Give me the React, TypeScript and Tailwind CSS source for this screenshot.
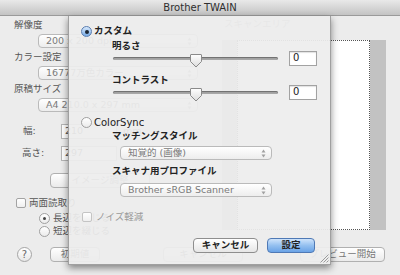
import type { ReactNode } from "react";

function Radio({ on, blue }: { on?: boolean; blue?: boolean }) {
  if (on && blue) {
    return (
      <span className="flex h-[11px] w-[11px] shrink-0 items-center justify-center rounded-full border border-[#5a7db0] bg-linear-to-b from-[#d6e8fb] to-[#78abe6]">
        <span className="h-[4px] w-[4px] rounded-full bg-[#1b2533]" />
      </span>
    );
  }
  return (
    <span className="flex h-[11px] w-[11px] shrink-0 items-center justify-center rounded-full border border-[#a0a0a0] bg-linear-to-b from-white to-[#ebebeb]">
      {on && <span className="h-[3px] w-[3px] rounded-full bg-[#444]" />}
    </span>
  );
}

function Check({ dim }: { dim?: boolean }) {
  return (
    <span
      className={`h-[10px] w-[10px] shrink-0 rounded-[2px] border bg-linear-to-b from-white to-[#efefef] ${dim ? "border-[#c4c4c4]" : "border-[#a3a3a3]"}`}
    />
  );
}

function Slider() {
  return (
    <div className="relative h-[15px] w-[165px]">
      <div className="absolute left-0 right-0 top-[6px] h-[3px] rounded-full bg-[#a7a7a7] shadow-[inset_0_1px_1px_rgba(0,0,0,0.35)]" />
      <svg className="absolute left-[77px] top-[3px]" width="12" height="14" viewBox="0 0 12 14">
        <defs>
          <linearGradient id="thumb" x1="0" y1="0" x2="0" y2="1">
            <stop offset="0" stopColor="#ffffff" />
            <stop offset="1" stopColor="#dcdcdc" />
          </linearGradient>
        </defs>
        <path d="M1 0.5 H11 Q11.5 0.5 11.5 1 V7.5 L6 13 L0.5 7.5 V1 Q0.5 0.5 1 0.5 Z" fill="url(#thumb)" stroke="#8a8a8a" />
      </svg>
    </div>
  );
}

function NumBox() {
  return (
    <div className="h-[15px] w-[28px] border border-[#a2a2a2] bg-white pl-[3px] text-[10px] leading-[12px] text-[#222] shadow-[inset_0_1px_1px_rgba(0,0,0,0.12)]">
      0
    </div>
  );
}

function Arrows() {
  return (
    <svg width="5" height="9" viewBox="0 0 5 9">
      <path d="M2.5 0.5 L4.5 3.5 H0.5 Z" fill="#a0a0a0" />
      <path d="M0.5 5.5 H4.5 L2.5 8.5 Z" fill="#a0a0a0" />
    </svg>
  );
}

function Select({ children, w }: { children: ReactNode; w: string }) {
  return (
    <div className={`flex h-[14px] items-center justify-between rounded-[4px] border border-[#bababa] bg-linear-to-b from-white to-[#ededed] pl-[7px] pr-[5px] text-[#7a7a7a] ${w}`}>
      <span className="leading-[12px]">{children}</span>
      <Arrows />
    </div>
  );
}

function BgButton({ children, w }: { children: ReactNode; w: string }) {
  return (
    <div className={`flex h-[15px] items-center justify-center rounded-[4px] border border-[#b0b0b0] bg-linear-to-b from-white to-[#ebebeb] text-[#777] ${w}`}>
      {children}
    </div>
  );
}

export default function App() {
  return (
    <div className="relative h-[275px] w-[400px] overflow-hidden bg-[#ececec] font-['DejaVu_Sans','Noto_Sans_CJK_JP',sans-serif] text-[9.5px] text-[#555]">
      {/* title bar */}
      <div className="flex h-[16px] items-center justify-center border-b border-[#9a9a9a] bg-linear-to-b from-[#e9e9e9] to-[#c3c3c3] text-[10px] text-[#2e2e2e]">
        Brother TWAIN
      </div>

      {/* window body */}
      <div className="flex h-[224px]">
        <div className="flex w-[222px] flex-col pl-[14px]">
          <div className="mt-[4px] h-[10px] leading-[10px]">解像度</div>
          <div className="ml-[24px] mt-[4px]">
            <Select w="w-[160px]">200 x 200 dpi</Select>
          </div>
          <div className="mt-[4px] h-[10px] leading-[10px]">カラー設定</div>
          <div className="ml-[24px] mt-[4px]">
            <Select w="w-[160px]">16777万色カラー</Select>
          </div>
          <div className="mt-[4px] h-[10px] leading-[10px]">原稿サイズ</div>
          <div className="ml-[24px] mt-[4px]">
            <Select w="w-[160px]">A4 210.0 x 297 mm</Select>
          </div>
          <div className="mt-[12px] flex h-[15px] items-center">
            <span className="w-[47px] pl-[9px]">幅:</span>
            <div className="flex h-[15px] w-[56px] items-center border border-[#b5b5b5] bg-white pl-[3px]">210</div>
            <span className="ml-[6px]">mm</span>
          </div>
          <div className="mt-[7px] flex h-[15px] items-center">
            <span className="w-[47px] pl-[8px]">高さ:</span>
            <div className="flex h-[15px] w-[56px] items-center border border-[#b5b5b5] bg-white pl-[3px]">297</div>
            <span className="ml-[6px]">mm</span>
          </div>
          <div className="ml-[36px] mt-[12px]">
            <BgButton w="w-[100px]">イメージ調整</BgButton>
          </div>
          <div className="mt-[10px] flex h-[10px] items-center gap-[3px] pl-[2px]">
            <Check />
            <span>両面読取り</span>
          </div>
          <div className="mt-[5px] flex h-[10px] items-center gap-[3px] pl-[25px]">
            <Radio on />
            <span>長辺を綴じる</span>
          </div>
          <div className="mt-[3px] flex h-[10px] items-center gap-[3px] pl-[25px]">
            <Radio />
            <span>短辺を綴じる</span>
          </div>
        </div>
        <div className="flex w-[164px] flex-col">
          <div className="mt-[3px] h-[10px] pl-[2px] leading-[10px] text-[#999]">スキャンエリア</div>
          <div className="mt-[11px] flex h-[190px] bg-[#c2c2c2] pl-[15px] pr-[16px]">
            <div className="flex-1 border border-dotted border-[#555] bg-white" />
          </div>
        </div>
      </div>

      {/* bottom buttons of the window */}
      <div className="mt-[7px] flex h-[15px] items-center pl-[17px]">
        <div className="flex h-[15px] w-[15px] items-center justify-center rounded-full border border-[#a5a5a5] bg-linear-to-b from-white to-[#e8e8e8] text-[10px] text-[#666]">
          ?
        </div>
        <div className="ml-[18px]">
          <BgButton w="w-[50px]">初期値</BgButton>
        </div>
        <div className="ml-[63px]">
          <BgButton w="w-[80px]">キャンセル</BgButton>
        </div>
        <div className="ml-[57px]">
          <BgButton w="w-[85px]">プレビュー開始</BgButton>
        </div>
      </div>

      {/* sheet */}
      <div className="absolute left-[68px] top-[16px] flex h-[249px] w-[263px] flex-col border border-t-0 border-[#a0a0a0] bg-[#ededed]/[0.93] pl-[12px] pt-[10px] text-[#222] shadow-[0_3px_7px_rgba(0,0,0,0.45)]">
        <div className="flex h-[11px] items-center gap-[2px]">
          <Radio on blue />
          <span className="font-bold">カスタム</span>
        </div>
        <div className="ml-[31px] mt-[4px] h-[10px] font-bold leading-[10px]">明るさ</div>
        <div className="ml-[32px] flex h-[15px] items-center gap-[11px]">
          <Slider />
          <NumBox />
        </div>
        <div className="ml-[31px] mt-[9px] h-[10px] font-bold leading-[10px]">コントラスト</div>
        <div className="ml-[32px] flex h-[15px] items-center gap-[11px]">
          <Slider />
          <NumBox />
        </div>
        <div className="mt-[17px] flex h-[11px] items-center gap-[2px]">
          <Radio />
          <span className="text-[10px]">ColorSync</span>
        </div>
        <div className="ml-[31px] mt-[3px] h-[10px] font-bold leading-[10px]">マッチングスタイル</div>
        <div className="ml-[39px] mt-[5px]">
          <Select w="w-[152px]">知覚的 (画像)</Select>
        </div>
        <div className="ml-[31px] mt-[6px] h-[10px] font-bold leading-[10px]">スキャナ用プロファイル</div>
        <div className="ml-[39px] mt-[7px]">
          <Select w="w-[152px]">Brother sRGB Scanner</Select>
        </div>
        <div className="ml-[1px] mt-[15px] flex h-[10px] items-center gap-[4px] text-[#9a9a9a]">
          <Check dim />
          <span>ノイズ軽減</span>
        </div>
        <div className="mt-[16px] flex h-[15px] justify-end gap-[9px] pr-[15px]">
          <div className="flex w-[65px] items-center justify-center rounded-[4px] border border-[#8e8e8e] bg-linear-to-b from-white to-[#e6e6e6] font-bold">
            キャンセル
          </div>
          <div className="flex w-[48px] items-center justify-center rounded-[4px] border border-[#4f79b5] bg-linear-to-b from-[#cfe4fb] via-[#94c0f0] to-[#6aa3e6] font-bold">
            設定
          </div>
        </div>
        <svg className="absolute bottom-[1px] right-[1px]" width="10" height="10" viewBox="0 0 10 10">
          <path d="M9.5 1.5 L1.5 9.5 M9.5 4.5 L4.5 9.5 M9.5 7.5 L7.5 9.5" stroke="#9a9a9a" strokeWidth="1" />
        </svg>
      </div>
    </div>
  );
}
